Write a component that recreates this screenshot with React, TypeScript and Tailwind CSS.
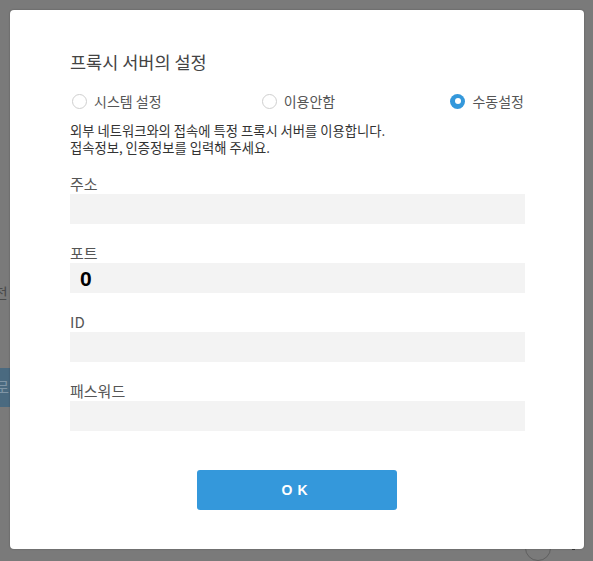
import React from "react";

const fields = [
  { label: "주소", value: "" },
  { label: "포트", value: "0" },
  { label: "ID", value: "" },
  { label: "패스워드", value: "" },
];

const radios = [
  { label: "시스템 설정", checked: false, width: "w-[191px]" },
  { label: "이용안함", checked: false, width: "w-[190px]" },
  { label: "수동설정", checked: true, width: "" },
];

const kr = "font-['Noto_Sans_CJK_KR','Noto_Sans',sans-serif]";

function Radio({ checked }: { checked: boolean }) {
  if (checked) {
    return (
      <span className="ml-[2px] flex h-[15px] w-[15px] shrink-0 items-center justify-center rounded-full bg-[#3498db]">
        <span className="h-[6px] w-[6px] rounded-full bg-white" />
      </span>
    );
  }
  return <span className="ml-[2px] h-[15px] w-[15px] shrink-0 rounded-full border border-[#cfcfcf] bg-white" />;
}

export default function App() {
  return (
    <div className={`relative h-[561px] w-[593px] overflow-hidden bg-[#7a7a7a] ${kr}`}>
      {/* dimmed page behind the dialog */}
      <span className="absolute left-[-6px] top-[283px] text-[15px] leading-[20px] text-[#4a4a4a]">전</span>
      <div className="absolute left-[-20px] top-[368px] flex h-[39px] w-[30px] items-center justify-end bg-[#4a6a80] pr-[1px] text-[15px] text-[#7f95a6]">
        로
      </div>
      <div className="absolute left-[525px] top-[535px] h-[26px] w-[26px] rounded-full border border-[#5f5f5f]" />
      <div className="absolute left-[572px] top-[546px] h-[4px] w-[3px] bg-[#3a3a3a]" />

      {/* dialog */}
      <div className="absolute left-[10px] top-[10px] flex h-[539px] w-[574px] flex-col rounded-[4px] bg-white px-[60px] pt-[40px] shadow-[0_0_2px_rgba(0,0,0,0.3)]">
        <h1 className="text-[17.5px] leading-[24px] text-[#444]">프록시 서버의 설정</h1>

        <div className="mt-[17px] flex h-[20px] items-center">
          {radios.map((r) => (
            <div key={r.label} className={`flex items-center gap-[7px] whitespace-nowrap ${r.width}`}>
              <Radio checked={r.checked} />
              <span className="text-[14px] leading-[20px] text-[#555]">{r.label}</span>
            </div>
          ))}
        </div>

        <p className="mt-[11px] text-[13.3px] leading-[17px] text-[#333]">
          외부 네트워크와의 접속에 특정 프록시 서버를 이용합니다.
          <br />
          접속정보, 인증정보를 입력해 주세요.
        </p>

        <div className="mt-[18px] flex flex-col gap-[19px]">
          {fields.map((f) => (
            <div key={f.label}>
              <div className="text-[15px] leading-[20px] text-[#555]">{f.label}</div>
              <div className="flex h-[30px] w-[455px] items-center bg-[#f3f3f3] px-[10px]">
                {f.value && (
                  <span className="font-['Liberation_Sans',Arial,sans-serif] text-[21px] font-bold leading-none text-black">
                    {f.value}
                  </span>
                )}
              </div>
            </div>
          ))}
        </div>

        <button className="mt-[39px] ml-[127px] flex h-[40px] w-[200px] items-center justify-center rounded-[3px] bg-[#3498db] font-['Liberation_Sans',Arial,sans-serif] text-[14px] font-bold tracking-[0.35em] text-white">
          OK
        </button>
      </div>
    </div>
  );
}
